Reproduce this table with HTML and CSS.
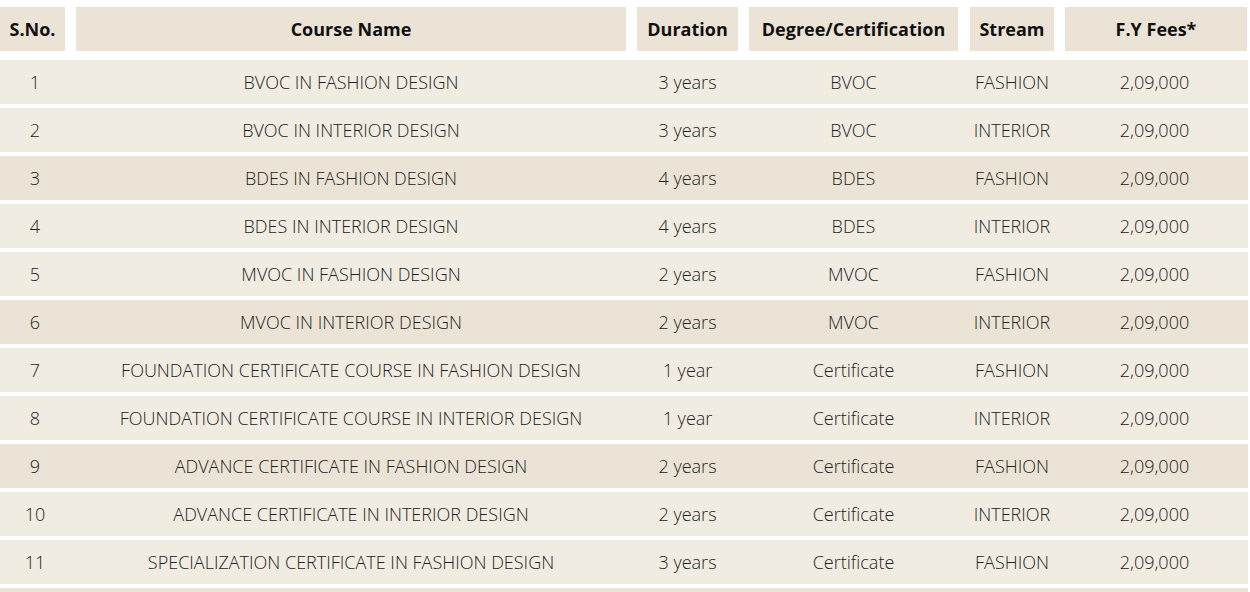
FILE: index.html
```html
<!DOCTYPE html>
<html>
<head>
<meta charset="utf-8">
<link rel="stylesheet" href="styles.css">
</head>
<body>
<div class="table">
  <div class="row head">
    <div class="cell">S.No.</div>
    <div class="cell">Course Name</div>
    <div class="cell">Duration</div>
    <div class="cell">Degree/Certification</div>
    <div class="cell">Stream</div>
    <div class="cell">F.Y Fees*</div>
  </div>
  <div class="body">
    <div class="row"><div class="cell">1</div><div class="cell">BVOC IN FASHION DESIGN</div><div class="cell">3 years</div><div class="cell">BVOC</div><div class="cell">FASHION</div><div class="cell">2,09,000</div></div>
    <div class="row"><div class="cell">2</div><div class="cell">BVOC IN INTERIOR DESIGN</div><div class="cell">3 years</div><div class="cell">BVOC</div><div class="cell">INTERIOR</div><div class="cell">2,09,000</div></div>
    <div class="row alt"><div class="cell">3</div><div class="cell">BDES IN FASHION DESIGN</div><div class="cell">4 years</div><div class="cell">BDES</div><div class="cell">FASHION</div><div class="cell">2,09,000</div></div>
    <div class="row"><div class="cell">4</div><div class="cell">BDES IN INTERIOR DESIGN</div><div class="cell">4 years</div><div class="cell">BDES</div><div class="cell">INTERIOR</div><div class="cell">2,09,000</div></div>
    <div class="row"><div class="cell">5</div><div class="cell">MVOC IN FASHION DESIGN</div><div class="cell">2 years</div><div class="cell">MVOC</div><div class="cell">FASHION</div><div class="cell">2,09,000</div></div>
    <div class="row alt"><div class="cell">6</div><div class="cell">MVOC IN INTERIOR DESIGN</div><div class="cell">2 years</div><div class="cell">MVOC</div><div class="cell">INTERIOR</div><div class="cell">2,09,000</div></div>
    <div class="row"><div class="cell">7</div><div class="cell">FOUNDATION CERTIFICATE COURSE IN FASHION DESIGN</div><div class="cell">1 year</div><div class="cell">Certificate</div><div class="cell">FASHION</div><div class="cell">2,09,000</div></div>
    <div class="row"><div class="cell">8</div><div class="cell">FOUNDATION CERTIFICATE COURSE IN INTERIOR DESIGN</div><div class="cell">1 year</div><div class="cell">Certificate</div><div class="cell">INTERIOR</div><div class="cell">2,09,000</div></div>
    <div class="row alt"><div class="cell">9</div><div class="cell">ADVANCE CERTIFICATE IN FASHION DESIGN</div><div class="cell">2 years</div><div class="cell">Certificate</div><div class="cell">FASHION</div><div class="cell">2,09,000</div></div>
    <div class="row"><div class="cell">10</div><div class="cell">ADVANCE CERTIFICATE IN INTERIOR DESIGN</div><div class="cell">2 years</div><div class="cell">Certificate</div><div class="cell">INTERIOR</div><div class="cell">2,09,000</div></div>
    <div class="row"><div class="cell">11</div><div class="cell">SPECIALIZATION CERTIFICATE IN FASHION DESIGN</div><div class="cell">3 years</div><div class="cell">Certificate</div><div class="cell">FASHION</div><div class="cell">2,09,000</div></div>
    <div class="row alt"><div class="cell">12</div><div class="cell">SPECIALIZATION CERTIFICATE IN INTERIOR DESIGN</div><div class="cell">3 years</div><div class="cell">Certificate</div><div class="cell">INTERIOR</div><div class="cell">2,09,000</div></div>
  </div>
</div>
</body>
</html>
```
FILE: styles.css
```css
html, body {
  margin: 0;
  padding: 0;
  background: #ffffff;
  overflow: hidden;
}
body {
  font-family: "Open Sans", "Liberation Sans", sans-serif;
  color: #333333;
}
.table {
  width: 1248px;
  padding-top: 7px;
}
.row {
  display: grid;
  grid-template-columns: 65px 550px 101px 209px 85px 182px;
  column-gap: 11px;
  height: 44px;
  align-items: center;
}
.row .cell:nth-child(5) {
  margin-left: 1px;
}
.row .cell {
  text-align: center;
  font-size: 18px;
  line-height: 44px;
  white-space: nowrap;
}
.head .cell {
  background: #ebe4d6;
  font-weight: 700;
  color: #111111;
  line-height: 45px;
  height: 44px;
}
.body {
  margin-top: 9px;
  display: flex;
  flex-direction: column;
  gap: 4px;
}
.body .row {
  background: #f1ece2;
}
.body .row.alt {
  background: #ebe4d6;
}
.body .cell {
  font-weight: 300;
  color: #222222;
}
.body .cell:first-child {
  padding-left: 5px;
}
.body .cell:last-child {
  padding-right: 3px;
}
```
